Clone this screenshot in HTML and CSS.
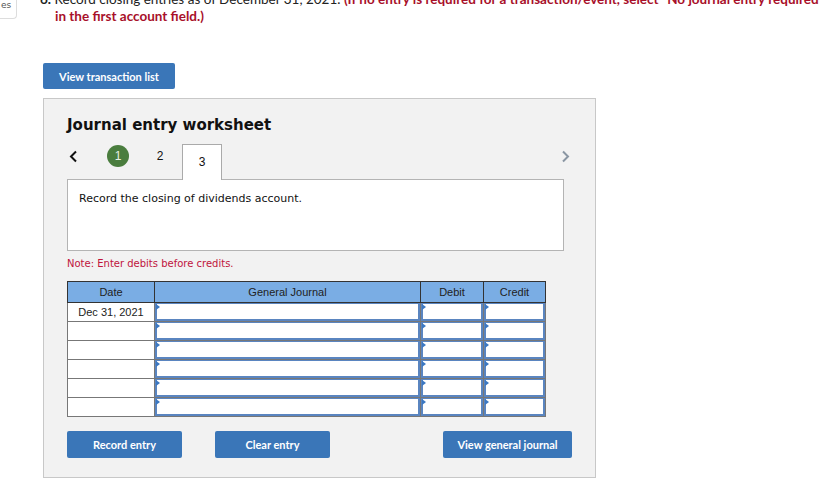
FILE: index.html
```html
<!DOCTYPE html>
<html lang="en">
<head>
    <meta charset="UTF-8">
    <title>Journal entry worksheet</title>
    <link rel="stylesheet" href="styles.css">
</head>
<body>

    <div class="page">
        <div class="side-stub">
            <div class="side-box">es</div>
        </div>

        <div class="content">
            <p class="question">
                <span class="q-num">6.</span> Record closing entries as of December 31, 2021. <b class="q-hint">(If no entry is required for a transaction/event, select "No journal entry required"<br>in the first account field.)</b>
            </p>

            <button class="btn btn-list">View transaction list</button>

            <div class="worksheet">
                <h3 class="ws-title">Journal entry worksheet</h3>

                <div class="ws-nav">
                    <span class="nav-arrow prev">
                        <svg width="9" height="13" viewBox="0 0 9 13"><path d="M7 1.5 L2 6.5 L7 11.5" fill="none" stroke="#111" stroke-width="2"/></svg>
                    </span>
                    <span class="ws-tab"><span class="done">1</span></span>
                    <span class="ws-tab">2</span>
                    <span class="ws-tab active">3</span>
                    <span class="nav-arrow next">
                        <svg width="9" height="13" viewBox="0 0 9 13"><path d="M2 1.5 L7 6.5 L2 11.5" fill="none" stroke="#8a96a3" stroke-width="2"/></svg>
                    </span>
                </div>

                <div class="ws-desc">Record the closing of dividends account.</div>

                <p class="ws-note">Note: Enter debits before credits.</p>

                <table class="journal">
                    <thead>
                        <tr>
                            <th class="col-date">Date</th>
                            <th class="col-acct">General Journal</th>
                            <th class="col-debit">Debit</th>
                            <th class="col-credit">Credit</th>
                        </tr>
                    </thead>
                    <tbody id="journal-rows"></tbody>
                </table>

                <div class="ws-actions">
                    <button class="btn">Record entry</button>
                    <button class="btn">Clear entry</button>
                    <button class="btn btn-wide">View general journal</button>
                </div>
            </div>
        </div>
    </div>

    <script>
        const rows = document.getElementById('journal-rows');
        for (let i = 0; i < 6; i++) {
            const tr = document.createElement('tr');
            tr.innerHTML = `
                <td class="date-cell">${i === 0 ? 'Dec 31, 2021' : ''}</td>
                <td><div class="cell-input"><input type="text"></div></td>
                <td><div class="cell-input"><input type="text"></div></td>
                <td><div class="cell-input"><input type="text"></div></td>
            `;
            rows.appendChild(tr);
        }
    </script>

</body>
</html>
```

FILE: styles.css
```css
body {
    margin: 0;
    font-family: Lato, "Liberation Sans", sans-serif;
    background-color: #fff;
    color: #222;
}

.page {
    display: flex;
}

.side-stub {
    width: 40px;
    flex-shrink: 0;
}

.side-box {
    width: 16px;
    height: 20px;
    margin-top: -2px;
    border: 1px solid #ddd;
    border-left: none;
    border-top: none;
    border-radius: 0 0 4px 0;
    font-family: "DejaVu Sans", sans-serif;
    font-size: 9px;
    color: #555;
    line-height: 14px;
    text-indent: 1px;
    overflow: hidden;
}

.content {
    width: 799px;
    overflow: hidden;
}

.question {
    margin: -9px 0 0 0;
    padding-left: 15px;
    text-indent: -15px;
    font-size: 13.5px;
    line-height: 17px;
    color: #222;
    white-space: nowrap;
}

.q-num {
    font-weight: bold;
}

.q-hint {
    color: #a8102a;
}

.btn {
    background-color: #3a76b8;
    color: #fff;
    border: none;
    border-radius: 2px;
    font-family: Lato, "Liberation Sans", sans-serif;
    font-weight: bold;
    font-size: 11px;
    height: 27px;
    width: 115px;
    padding: 0;
    cursor: pointer;
}

.btn-list {
    margin: 38px 0 0 3px;
    width: 132px;
    height: 26px;
    display: block;
}

.worksheet {
    box-sizing: border-box;
    margin: 9px 0 0 3px;
    width: 553px;
    background-color: #f2f2f2;
    border: 1px solid #c8c8c8;
    padding: 17px 24px 19px 23px;
}

.ws-title {
    margin: 0;
    font-family: "DejaVu Sans", Verdana, sans-serif;
    font-size: 15px;
    line-height: 18px;
    color: #111;
}

.ws-nav {
    display: flex;
    align-items: flex-end;
    margin-top: 10px;
    height: 35px;
}

.nav-arrow {
    display: flex;
    align-items: center;
    height: 24px;
    margin-bottom: 11px;
}

.nav-arrow.prev {
    width: 31px;
    padding-left: 2px;
    box-sizing: border-box;
}

.nav-arrow.next {
    margin-left: auto;
    padding-right: 1px;
}

.ws-tab {
    width: 40px;
    height: 35px;
    margin-right: 2px;
    display: flex;
    justify-content: center;
    align-items: center;
    padding-bottom: 11px;
    box-sizing: border-box;
    font-family: "Liberation Sans", Arial, sans-serif;
    font-size: 12px;
    color: #111;
}

.ws-tab.active {
    background-color: #fff;
    border: 1px solid #aaa;
    border-bottom: none;
    margin-bottom: -1px;
    height: 36px;
    padding-bottom: 2px;
    position: relative;
    z-index: 1;
}

.done {
    width: 22px;
    height: 22px;
    border-radius: 50%;
    background-color: #4a7d3e;
    color: #e8f0e4;
    display: flex;
    justify-content: center;
    align-items: center;
}

.ws-desc {
    width: 497px;
    height: 72px;
    box-sizing: border-box;
    background-color: #fff;
    border: 1px solid #b4b4b4;
    padding: 12px 11px;
    font-family: "DejaVu Sans", Verdana, sans-serif;
    font-size: 11px;
    color: #111;
}

.ws-note {
    margin: 7px 0 0 0;
    font-family: "DejaVu Sans", Verdana, sans-serif;
    font-size: 10px;
    color: #c0143c;
}

.journal {
    margin-top: 12px;
    border-collapse: collapse;
    width: 478px;
    table-layout: fixed;
    font-family: "Liberation Sans", Arial, sans-serif;
    font-size: 11px;
}

.journal th {
    background-color: #7aade4;
    border: 1px solid #333;
    height: 20px;
    font-weight: normal;
    color: #222;
    padding: 0;
}

.col-date { width: 86px; }
.col-acct { width: 265px; }
.col-debit { width: 62px; }
.col-credit { width: 61px; }

.journal td {
    border: 1px solid #777;
    height: 18px;
    padding: 0;
    background-color: #fff;
}

.date-cell {
    text-align: center;
    color: #222;
}

.cell-input {
    position: relative;
    height: 18px;
}

.cell-input::before {
    content: "";
    position: absolute;
    left: 1px;
    top: 1px;
    border-left: 4px solid #3b78c2;
    border-top: 3px solid transparent;
    border-bottom: 3px solid transparent;
}

.cell-input input {
    display: block;
    width: 100%;
    height: 18px;
    box-sizing: border-box;
    border: 2px solid #5a85c0;
    border-top-width: 1px;
    margin: 0;
    padding: 0 4px;
    background: #fff;
}

.ws-actions {
    display: flex;
    gap: 33px;
    width: 505px;
    margin-top: 14px;
}

.btn-wide {
    width: 129px;
    margin-left: auto;
}
```
